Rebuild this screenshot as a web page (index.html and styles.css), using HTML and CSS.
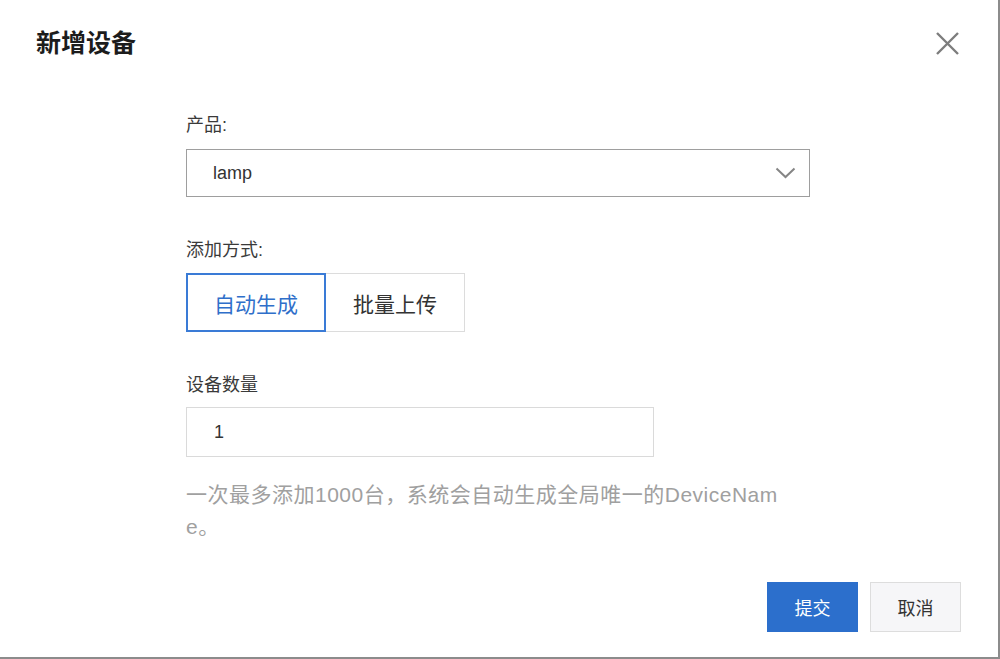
FILE: index.html
```html
<!DOCTYPE html>
<html lang="zh-CN">
<head>
<meta charset="utf-8">
<title>新增设备</title>
<link rel="stylesheet" href="styles.css">
</head>
<body>
<div class="dialog">
  <div class="header">
    <h1 class="title">新增设备</h1>
    <button class="close" aria-label="关闭">
      <svg width="23" height="23" viewBox="0 0 23 23"><path d="M1 1 L22 22 M22 1 L1 22" stroke="#7d7d7d" stroke-width="2.4" fill="none"/></svg>
    </button>
  </div>
  <div class="form">
    <div class="label">产品:</div>
    <div class="select">
      <span class="select-value">lamp</span>
      <svg class="chevron" width="21" height="12" viewBox="0 0 21 12"><path d="M1.5 1.5 L10.5 10 L19.5 1.5" stroke="#858585" stroke-width="2" fill="none"/></svg>
    </div>
    <div class="label label-gap">添加方式:</div>
    <div class="toggle">
      <button class="toggle-btn active">自动生成</button>
      <button class="toggle-btn">批量上传</button>
    </div>
    <div class="label label-gap">设备数量</div>
    <div class="input"><span class="input-value">1</span></div>
    <p class="help">一次最多添加1000台，系统会自动生成全局唯一的DeviceName。</p>
  </div>
  <div class="footer">
    <button class="btn btn-primary">提交</button>
    <button class="btn btn-default">取消</button>
  </div>
</div>
</body>
</html>
```
FILE: styles.css
```css
html, body {
  margin: 0;
  padding: 0;
  background: #ffffff;
}
body {
  font-family: "Liberation Sans", "Noto Sans CJK SC", sans-serif;
  color: #333;
}
.dialog {
  width: 1000px;
  height: 659px;
  box-sizing: border-box;
  border-right: 2px solid #8c8c8c;
  border-bottom: 2px solid #8c8c8c;
  display: flex;
  flex-direction: column;
  background: #fff;
}
.header {
  display: flex;
  justify-content: space-between;
  align-items: center;
  padding: 27px 39px 0 36px;
}
.title {
  margin: 0;
  font-size: 25px;
  line-height: 32px;
  font-weight: bold;
  color: #1c1c1c;
}
.close {
  border: none;
  background: none;
  padding: 0;
  width: 23px;
  height: 23px;
  display: flex;
  cursor: pointer;
}
.form {
  margin-left: 186px;
  width: 624px;
  padding-top: 54px;
  display: flex;
  flex-direction: column;
}
.label {
  font-size: 18px;
  line-height: 24px;
  color: #3a3a3a;
}
.label-gap {
  margin-top: 41px;
}
.select {
  margin-top: 12px;
  height: 48px;
  box-sizing: border-box;
  border: 1px solid #9e9e9e;
  display: flex;
  align-items: center;
  justify-content: space-between;
  padding: 0 13px 0 26px;
}
.select-value {
  font-size: 18px;
  color: #333;
}
.toggle {
  margin-top: 11px;
  display: flex;
}
.toggle-btn {
  font-family: inherit;
  width: 140px;
  height: 59px;
  box-sizing: border-box;
  background: #fff;
  border: 1px solid #dcdcdc;
  font-size: 21px;
  color: #333;
  padding: 0;
}
.toggle-btn.active {
  border: 2px solid #3a7bd6;
  color: #2f6fca;
}
.toggle-btn + .toggle-btn {
  border-left: none;
  width: 139px;
}
.input {
  margin-top: 10px;
  width: 468px;
  height: 50px;
  box-sizing: border-box;
  border: 1px solid #dadada;
  display: flex;
  align-items: center;
  padding-left: 27px;
}
.input-value {
  font-size: 18px;
  color: #333;
}
.help {
  margin: 22px 0 0;
  width: 602px;
  font-size: 21px;
  line-height: 32px;
  letter-spacing: 0.5px;
  color: #a0a0a0;
  word-break: break-all;
}
.footer {
  margin-top: auto;
  display: flex;
  justify-content: flex-end;
  gap: 12px;
  padding: 0 37px 25px 0;
}
.btn {
  font-family: inherit;
  width: 91px;
  height: 50px;
  box-sizing: border-box;
  font-size: 18px;
  padding: 0;
  cursor: pointer;
}
.btn-primary {
  background: #2c6fcc;
  border: 1px solid #2c6fcc;
  color: #fff;
}
.btn-default {
  background: #f6f6f8;
  border: 1px solid #dddddd;
  color: #333;
}
```
